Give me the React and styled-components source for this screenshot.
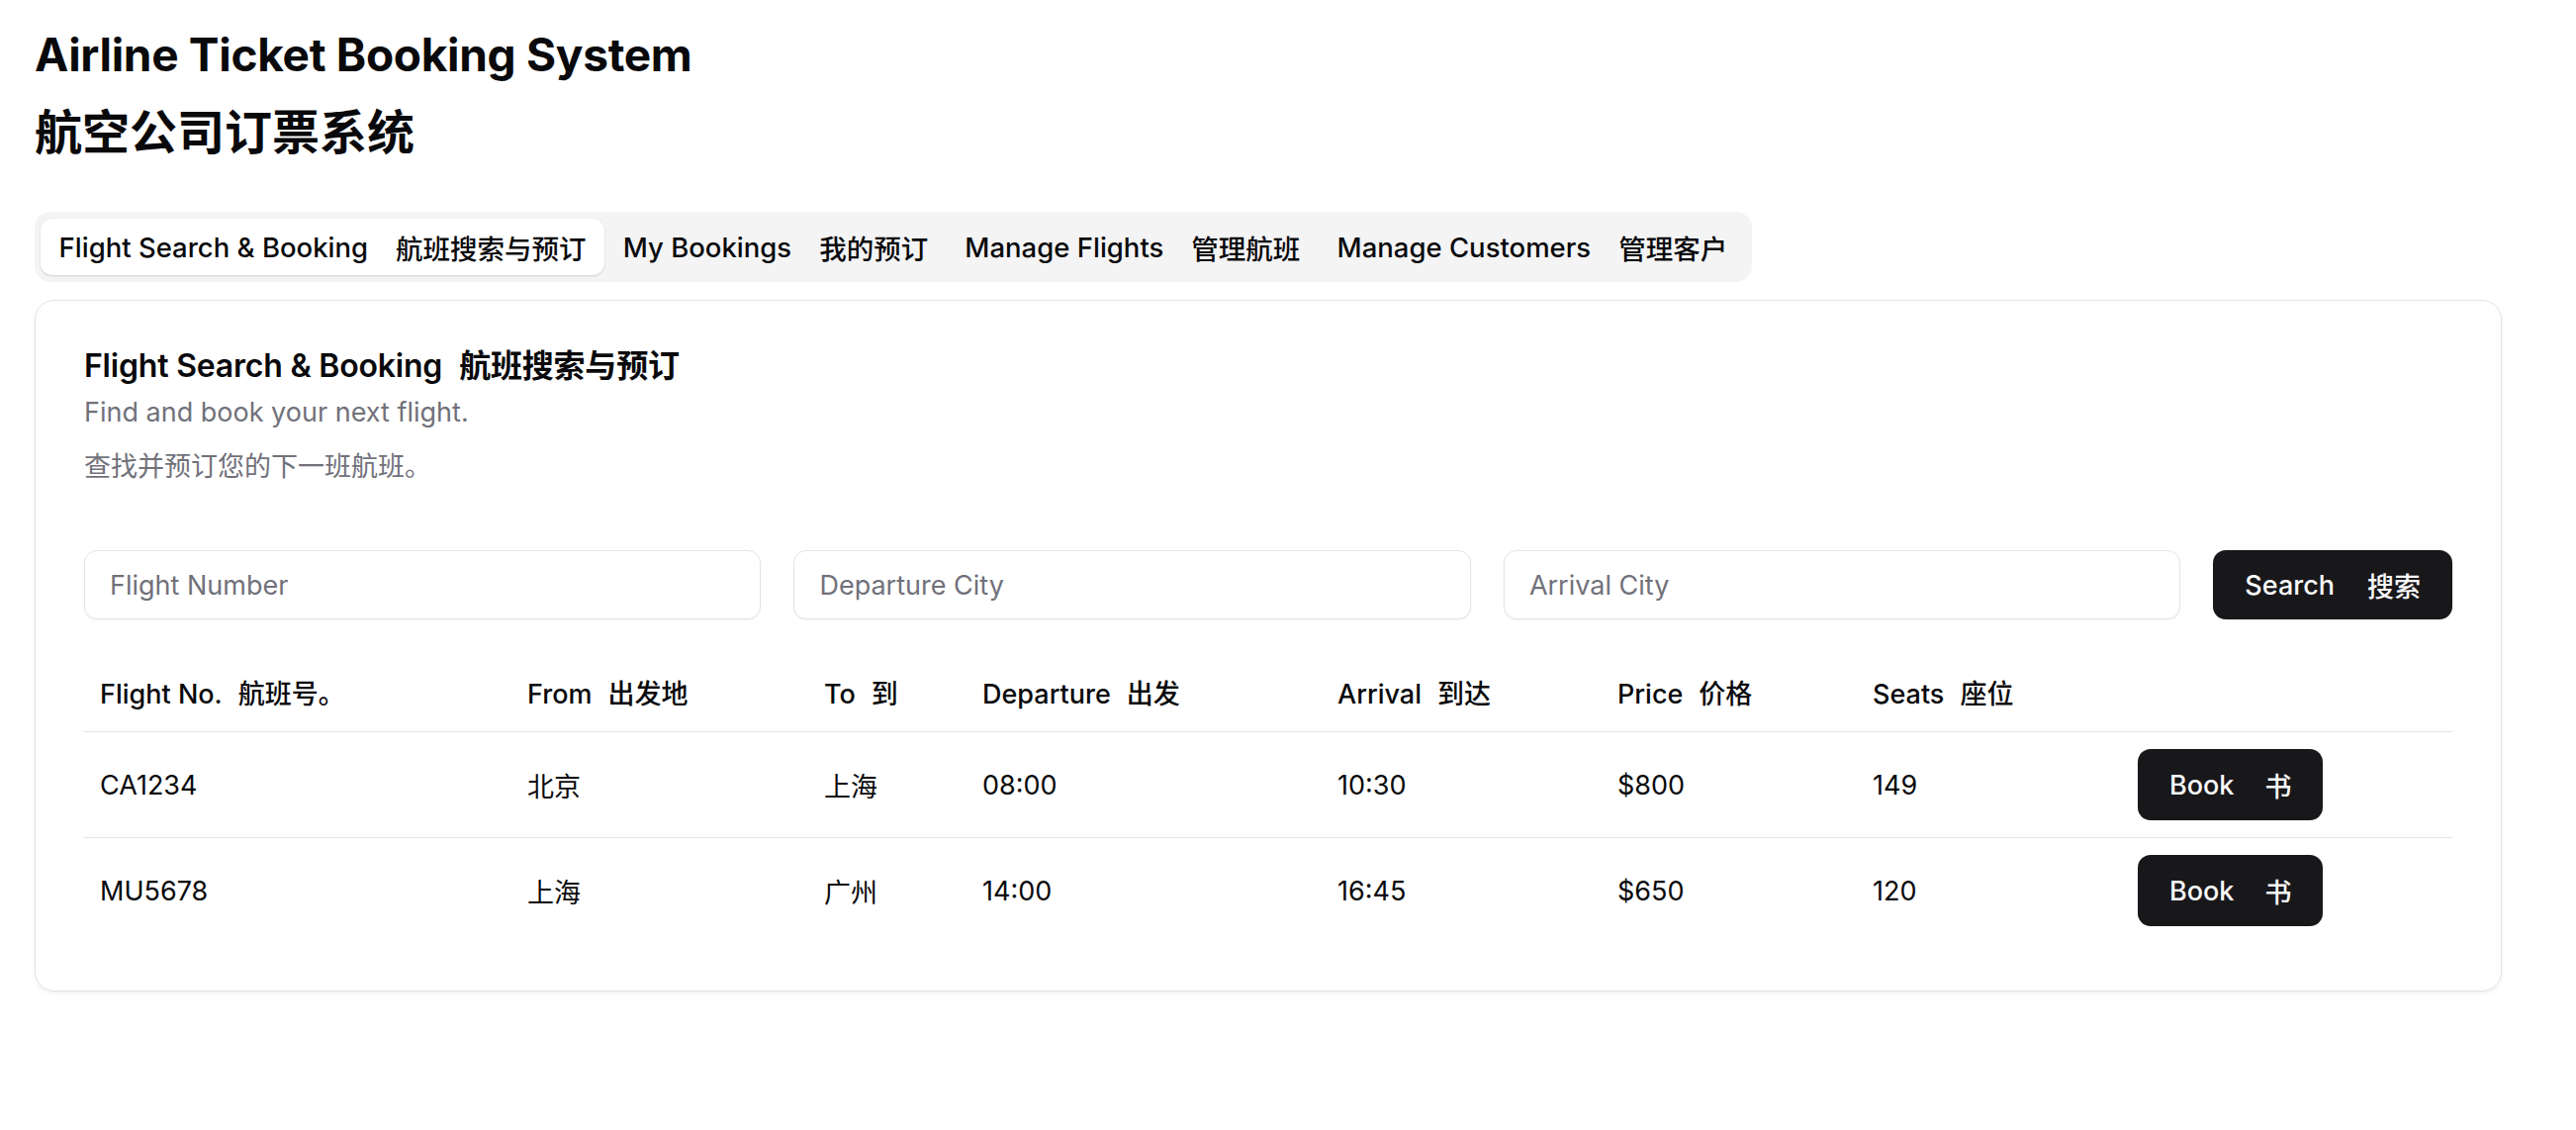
import React from "react";
import styled, { createGlobalStyle } from "styled-components";

const GlobalStyle = createGlobalStyle`
  body {
    margin: 0;
    background: #ffffff;
    color: #09090b;
    font-family: Inter, "Noto Sans CJK SC", sans-serif;
  }
  * {
    box-sizing: border-box;
  }
`;

const tabs = [
  { en: "Flight Search & Booking", zh: "航班搜索与预订", active: true },
  { en: "My Bookings", zh: "我的预订" },
  { en: "Manage Flights", zh: "管理航班" },
  { en: "Manage Customers", zh: "管理客户" },
];

const columns = [
  { en: "Flight No.", zh: "航班号。" },
  { en: "From", zh: "出发地" },
  { en: "To", zh: "到" },
  { en: "Departure", zh: "出发" },
  { en: "Arrival", zh: "到达" },
  { en: "Price", zh: "价格" },
  { en: "Seats", zh: "座位" },
  { en: "", zh: "" },
];

const flights = [
  { no: "CA1234", from: "北京", to: "上海", dep: "08:00", arr: "10:30", price: "$800", seats: 149 },
  { no: "MU5678", from: "上海", to: "广州", dep: "14:00", arr: "16:45", price: "$650", seats: 120 },
];

const App = () => {
  return (
    <Page>
      <GlobalStyle />
      <Inner>
        <Title>Airline Ticket Booking System</Title>
        <SubTitle>航空公司订票系统</SubTitle>

        <TabList>
          {tabs.map((t) => (
            <Tab key={t.en} $active={t.active}>
              {t.en}
              <Zh $gap={28}>{t.zh}</Zh>
            </Tab>
          ))}
        </TabList>

        <Card>
          <CardTitle>
            Flight Search &amp; Booking
            <Zh $gap={17}>航班搜索与预订</Zh>
          </CardTitle>
          <Description>Find and book your next flight.</Description>
          <Description $top={15}>查找并预订您的下一班航班。</Description>

          <SearchRow>
            <Input placeholder="Flight Number" />
            <Input placeholder="Departure City" />
            <Input placeholder="Arrival City" />
            <Button $h={70}>
              Search
              <Zh $gap={33}>搜索</Zh>
            </Button>
          </SearchRow>

          <Table>
            <HeadRow>
              {columns.map((c, i) => (
                <HeadCell key={i}>
                  {c.en}
                  {c.zh && <Zh $gap={16}>{c.zh}</Zh>}
                </HeadCell>
              ))}
            </HeadRow>
            {flights.map((f) => (
              <Row key={f.no}>
                <Cell>{f.no}</Cell>
                <Cell>{f.from}</Cell>
                <Cell>{f.to}</Cell>
                <Cell>{f.dep}</Cell>
                <Cell>{f.arr}</Cell>
                <Cell>{f.price}</Cell>
                <Cell>{f.seats}</Cell>
                <Cell>
                  <Button $h={72}>
                    Book
                    <Zh $gap={31}>书</Zh>
                  </Button>
                </Cell>
              </Row>
            ))}
          </Table>
        </Card>
      </Inner>
    </Page>
  );
};

export default App;

const Page = styled.div`
  padding: 26px 35px 60px;
`;

const Inner = styled.div`
  width: 2494px;
  display: flex;
  flex-direction: column;
  align-items: flex-start;
`;

const Title = styled.h1`
  margin: 0;
  font-size: 46px;
  line-height: 58px;
  font-weight: 700;
  letter-spacing: -0.3px;
  color: #09090b;
`;

const SubTitle = styled.h2`
  margin: 17px 0 0;
  font-family: "Noto Sans CJK SC", sans-serif;
  font-size: 48px;
  line-height: 58px;
  font-weight: 700;
  color: #09090b;
`;

const Zh = styled.span`
  margin-left: ${(p) => p.$gap || 16}px;
  font-family: "Noto Sans CJK SC", sans-serif;
`;

const TabList = styled.div`
  margin-top: 55px;
  display: inline-flex;
  align-items: center;
  padding: 7px 6px;
  background: #f4f4f5;
  border-radius: 16px;
`;

const Tab = styled.div`
  height: 57px;
  display: flex;
  align-items: center;
  padding: 0 18.6px;
  border-radius: 12px;
  font-size: 27.5px;
  font-weight: 500;
  white-space: nowrap;
  color: #09090b;
  background: ${(p) => (p.$active ? "#ffffff" : "transparent")};
  box-shadow: ${(p) =>
    p.$active ? "0 1px 3px rgba(0,0,0,0.10), 0 1px 2px rgba(0,0,0,0.06)" : "none"};
`;

const Card = styled.div`
  margin-top: 18px;
  width: 100%;
  border: 1px solid #e4e4e7;
  border-radius: 20px;
  background: #ffffff;
  box-shadow: 0 2px 4px rgba(0, 0, 0, 0.06);
  padding: 48px 49px 48px;
`;

const CardTitle = styled.div`
  font-size: 32px;
  line-height: 31px;
  font-weight: 600;
  letter-spacing: -0.2px;
  color: #09090b;
`;

const Description = styled.p`
  margin: ${(p) => p.$top || 12}px 0 0;
  font-size: 27px;
  line-height: 40px;
  color: #71717a;
`;

const SearchRow = styled.div`
  margin-top: 64px;
  display: grid;
  grid-template-columns: 1fr 1fr 1fr auto;
  gap: 33px;
  align-items: center;
`;

const Input = styled.input`
  height: 70px;
  padding: 0 25px;
  border: 1.5px solid #e4e4e7;
  border-radius: 13px;
  box-shadow: 0 1px 2px rgba(0, 0, 0, 0.05);
  font-family: Inter, "Noto Sans CJK SC", sans-serif;
  font-size: 27px;
  color: #09090b;
  outline: none;
  background: #ffffff;

  &::placeholder {
    color: #71717a;
  }
`;

const Button = styled.button`
  height: ${(p) => p.$h}px;
  padding: 0 32px;
  display: inline-flex;
  align-items: center;
  border: none;
  border-radius: 13px;
  background: #18181b;
  color: #fafafa;
  font-family: Inter, "Noto Sans CJK SC", sans-serif;
  font-size: 27px;
  font-weight: 500;
  white-space: nowrap;
  cursor: pointer;
`;

const Table = styled.div`
  margin-top: 33px;
  display: flex;
  flex-direction: column;
`;

const gridCols = "432px 300px 160px 359px 283px 258px 268px 1fr";

const HeadRow = styled.div`
  display: grid;
  grid-template-columns: ${gridCols};
  align-items: center;
  height: 81px;
  border-bottom: 1.5px solid #e4e4e7;
`;

const HeadCell = styled.div`
  padding: 0 16px;
  font-size: 27px;
  font-weight: 500;
  color: #09090b;
  white-space: nowrap;
`;

const Row = styled.div`
  display: grid;
  grid-template-columns: ${gridCols};
  align-items: center;
  padding: 17px 0;
  border-bottom: 1.5px solid #e4e4e7;

  &:last-child {
    border-bottom: none;
  }
`;

const Cell = styled.div`
  padding: 0 16px;
  font-size: 27px;
  color: #09090b;
  white-space: nowrap;
`;
